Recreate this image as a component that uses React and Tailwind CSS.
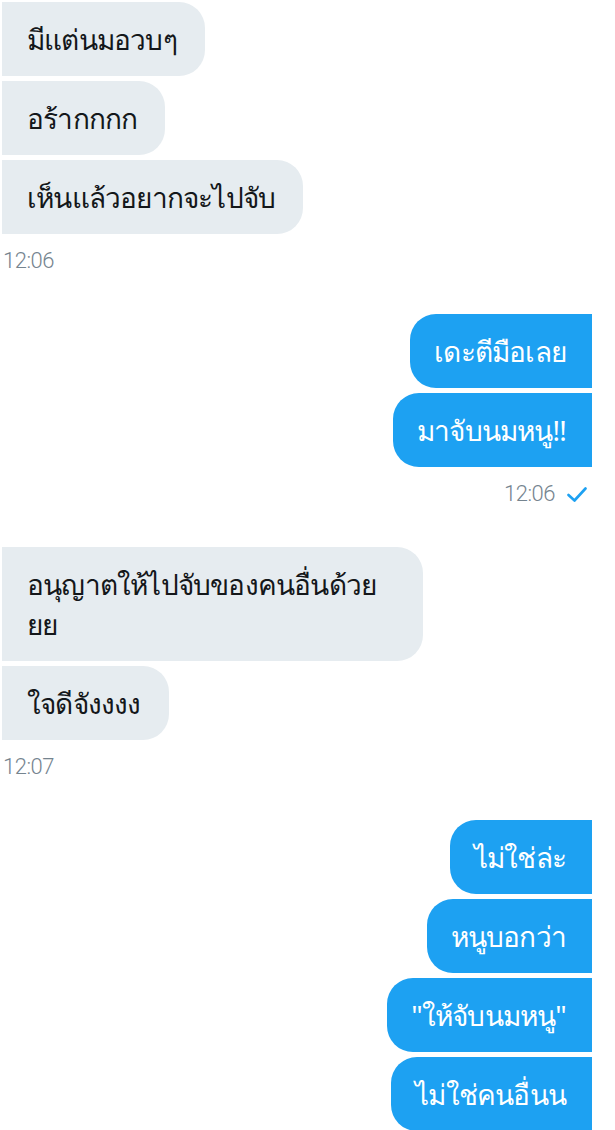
import React from "react";

const groups = [
  { me: false, time: "12:06", msgs: ["มีแต่นมอวบๆ", "อร้ากกกก", "เห็นแล้วอยากจะไปจับ"] },
  { me: true, time: "12:06", msgs: ["เดะตีมือเลย", "มาจับนมหนู!!"] },
  { me: false, time: "12:07", msgs: ["อนุญาตให้ไปจับของคนอื่นด้วยยย", "ใจดีจังงงง"] },
  { me: true, time: null, msgs: ["ไม่ใช่ล่ะ", "หนูบอกว่า", "\"ให้จับนมหนู\"", "ไม่ใช่คนอื่นน"] },
];

function Bubble({ me, text }) {
  if (me) {
    return (
      <div className="max-w-[420px] rounded-l-[26px] bg-[#1da1f2] py-[17px] pl-[24px] pr-[26px] text-[28px] leading-[40px] tracking-[-0.8px] text-white">
        {text}
      </div>
    );
  }
  return (
    <div className="max-w-[421px] rounded-r-[26px] bg-[#e6ecf0] py-[17px] pl-[25px] pr-[28px] text-[28px] leading-[40px] tracking-[-0.8px] text-[#14171a]">
      {text}
    </div>
  );
}

export default function App() {
  return (
    <div className="h-[1130px] w-[615px] overflow-hidden bg-white pt-[2px] font-['Noto_Sans','Liberation_Sans',sans-serif]">
      {groups.map((g, i) => (
        <div key={i} className={`mb-[39px] flex flex-col ${g.me ? "items-end pr-[23px]" : "items-start pl-[2px]"}`}>
          <div className={`flex flex-col gap-[5px] ${g.me ? "items-end" : "items-start"}`}>
            {g.msgs.map((m, j) => (
              <Bubble key={j} me={g.me} text={m} />
            ))}
          </div>
          {g.time && (
            <div className={`mt-[11px] flex h-[30px] items-center gap-[12px] text-[22px] font-light tracking-[-0.5px] text-[#75848f] font-['Roboto',sans-serif] ${g.me ? "pr-[5px]" : "pl-[1px]"}`}>
              <span>{g.time}</span>
              {g.me && (
                <svg width="20" height="15" viewBox="0 0 20 15" className="mt-[2px]">
                  <polyline points="1.5,8 7.5,13.5 18.5,1.5" fill="none" stroke="#1da1f2" strokeWidth="2.6" strokeLinecap="round" strokeLinejoin="round" />
                </svg>
              )}
            </div>
          )}
        </div>
      ))}
    </div>
  );
}
